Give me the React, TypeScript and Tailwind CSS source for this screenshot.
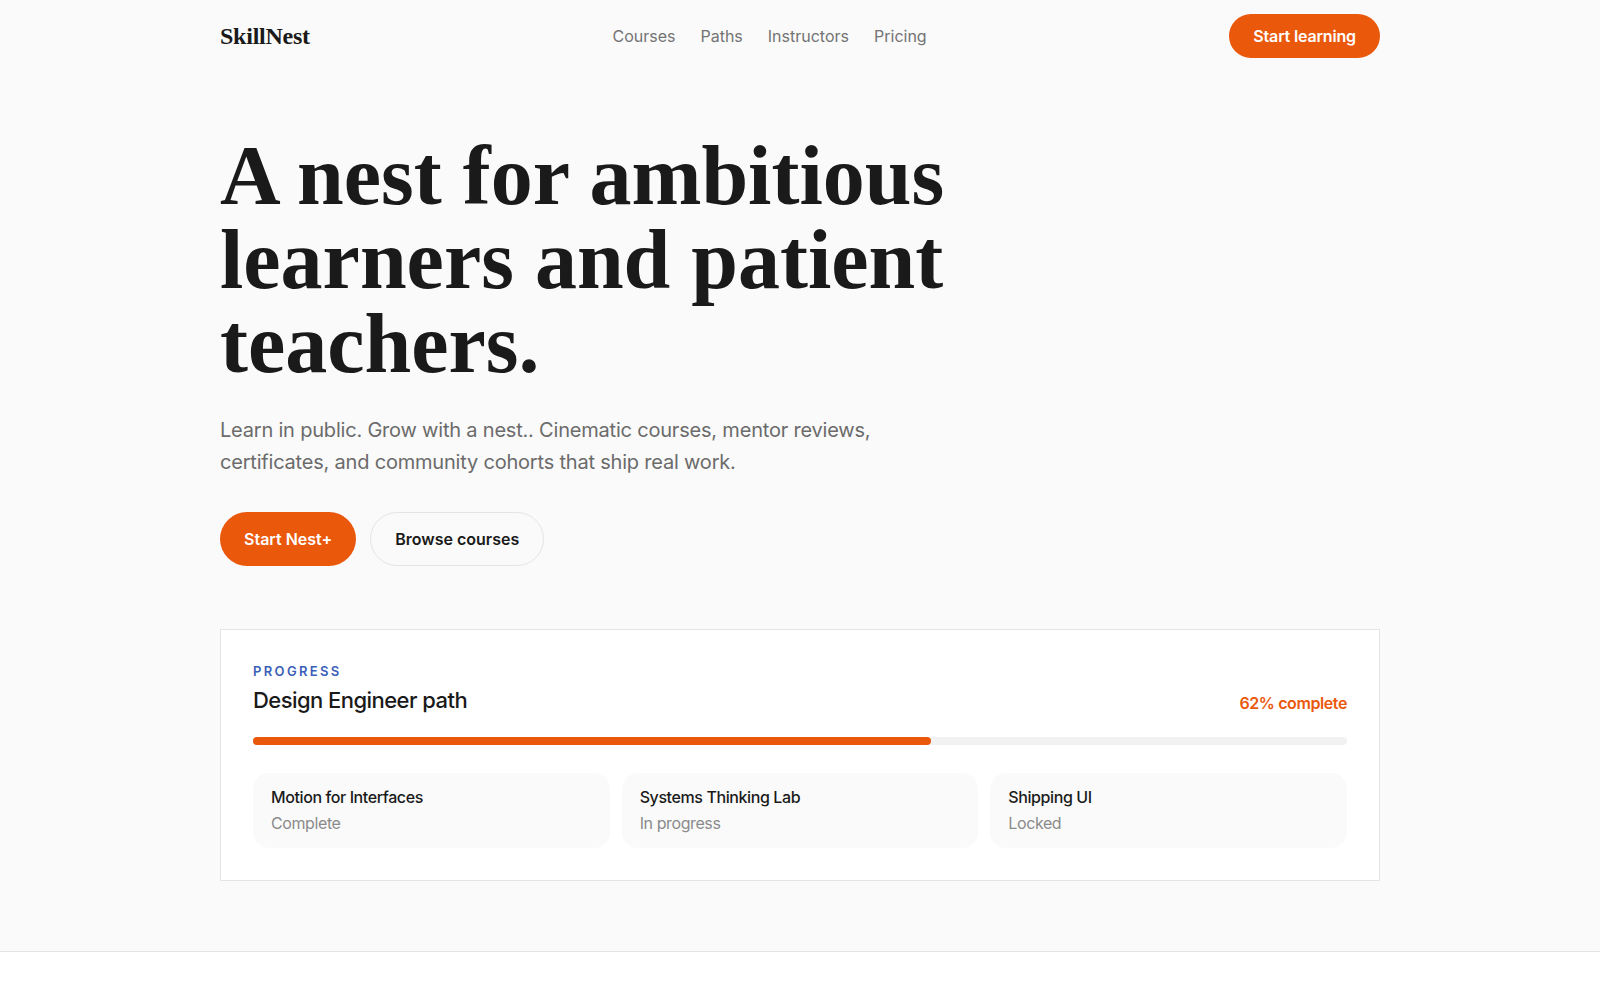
const navLinks = ["Courses", "Paths", "Instructors", "Pricing"];

const modules = [
  { title: "Motion for Interfaces", status: "Complete" },
  { title: "Systems Thinking Lab", status: "In progress" },
  { title: "Shipping UI", status: "Locked" },
];

const sans = "font-['Inter','Liberation_Sans',sans-serif]";
const serif = "font-['Liberation_Serif','DejaVu_Serif',serif]";

export default function App() {
  const progress = 62;

  return (
    <div className={`min-h-screen bg-white text-[#171717] ${sans}`}>
      <section className="bg-[#fafafa] border-b border-[#e5e5e5]">
        <div className="mx-auto max-w-[1200px] px-5">
          {/* Top nav */}
          <header className="flex h-[72px] items-center justify-between">
            <a className={`${serif} text-[24px] font-bold tracking-[-0.01em] text-[#1a1a1a]`}>
              SkillNest
            </a>
            <nav className="flex items-center gap-[25px] text-[16px] text-[#737373]">
              {navLinks.map((link) => (
                <a key={link}>{link}</a>
              ))}
            </nav>
            <button className="h-[44px] rounded-full bg-[#ea580c] px-6 text-[16px] font-semibold tracking-[-0.01em] text-white">
              Start learning
            </button>
          </header>

          {/* Hero */}
          <div className="pt-[62px] pb-[70px]">
            <h1
              className={`${serif} max-w-[780px] text-[84px] font-bold leading-[84px] text-[#1a1a1a]`}
            >
              A nest for ambitious learners and patient teachers.
            </h1>
            <p className="mt-[28px] max-w-[680px] text-[20px] leading-[32px] tracking-[-0.01em] text-[#6b6b6b]">
              Learn in public. Grow with a nest.. Cinematic courses, mentor reviews,
              certificates, and community cohorts that ship real work.
            </p>
            <div className="mt-[34px] flex items-center gap-[14px]">
              <button className="h-[54px] rounded-full bg-[#ea580c] px-6 text-[16px] font-semibold text-white">
                Start Nest+
              </button>
              <button className="h-[54px] rounded-full border border-[#e5e5e5] bg-[#fafafa] px-6 text-[16px] font-semibold text-[#1a1a1a]">
                Browse courses
              </button>
            </div>

            {/* Progress card */}
            <div className="mt-[63px] border border-[#e5e5e5] bg-white p-8">
              <div className="flex items-end justify-between">
                <div>
                  <p className="text-[13px] font-semibold uppercase tracking-[0.18em] text-[#3b5fb8]">
                    Progress
                  </p>
                  <h2 className="mt-0.5 text-[22px] font-medium tracking-tight text-[#1a1a1a]">
                    Design Engineer path
                  </h2>
                </div>
                <span className="pb-0.5 text-[16px] font-semibold tracking-tight text-[#ea580c]">
                  {progress}% complete
                </span>
              </div>
              <div className="mt-[20px] h-2 w-full rounded-full bg-[#f2f2f2]">
                <div
                  className="h-2 rounded-full bg-[#ea580c]"
                  style={{ width: `${progress}%` }}
                />
              </div>
              <div className="mt-[28px] grid grid-cols-3 gap-3">
                {modules.map((m) => (
                  <div key={m.title} className="rounded-2xl bg-[#fafafa] px-[18px] pt-3 pb-[13px]">
                    <p className="text-[16px] font-medium tracking-tight text-[#1a1a1a]">
                      {m.title}
                    </p>
                    <p className="mt-0.5 text-[16px] tracking-tight text-[#8a8a8a]">{m.status}</p>
                  </div>
                ))}
              </div>
            </div>
          </div>
        </div>
      </section>
      <div className="h-[300px] bg-white" />
    </div>
  );
}
